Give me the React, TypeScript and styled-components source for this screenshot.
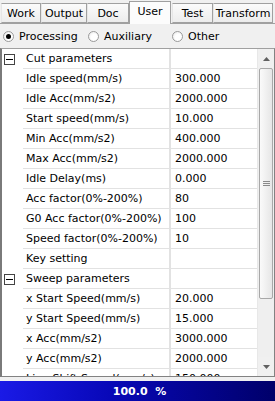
import React, { useState } from 'react'
import styled, { createGlobalStyle } from 'styled-components';

const GlobalStyle = createGlobalStyle`
    html, body {
        margin: 0;
        padding: 0;
        background: #f0f0f0;
    }
    * {
        box-sizing: border-box;
    }
`;

const font = `"DejaVu Sans", Tahoma, sans-serif`;

const Page = styled.div`
        width: 275px;
        height: 401px;
        display: flex;
        flex-direction: column;
        font-family: ${font};
        font-size: 11px;
        color: #000;
        background: #f0f0f0;
        overflow: hidden;
`;

const TabStrip = styled.div`
        height: 24px;
        display: flex;
        align-items: flex-end;
        padding-left: 1px;
        border-bottom: 1px solid #a0a0a0;
        flex-shrink: 0;
`;

const Tab = styled.div<{ $active?: boolean; $w: number }>`
        width: ${p => p.$w}px;
        height: ${p => (p.$active ? 23 : 20)}px;
        margin-bottom: ${p => (p.$active ? -1 : 0)}px;
        display: flex;
        align-items: center;
        justify-content: center;
        padding-bottom: ${p => (p.$active ? 3 : 0)}px;
        background: ${p => (p.$active ? '#fcfcfc' : 'linear-gradient(#fbfbfb, #ececec)')};
        border: 1px solid #a0a0a0;
        border-bottom: ${p => (p.$active ? 'none' : '1px solid #a0a0a0')};
        border-left-color: ${p => (p.$active ? '#a0a0a0' : '#e6e6e6')};
        margin-right: ${p => (p.$active ? 1 : 0)}px;
        white-space: nowrap;
`;

const RadioRow = styled.div`
        height: 24px;
        display: flex;
        align-items: center;
        padding-left: 3px;
        flex-shrink: 0;
`;

const RadioItem = styled.label<{ $w: number }>`
        width: ${p => p.$w}px;
        display: flex;
        align-items: center;
        gap: 5px;
`;

const RadioDot = styled.span<{ $on?: boolean }>`
        width: 11px;
        height: 11px;
        border-radius: 50%;
        border: 1px solid #9a9a9a;
        background: radial-gradient(circle at 60% 60%, #ffffff 40%, #e4e4e4);
        display: flex;
        align-items: center;
        justify-content: center;
        &::after {
            content: '';
            width: 5px;
            height: 5px;
            border-radius: 50%;
            background: ${p => (p.$on ? '#000' : 'transparent')};
        }
`;

const GridFrame = styled.div`
        height: 329px;
        display: flex;
        border: 1px solid #828282;
        border-left: 2px solid #7a7a7a;
        border-top: 1px solid #a0a0a0;
        background: #fff;
        flex-shrink: 0;
`;

const GridBody = styled.div`
        flex: 1;
        overflow: hidden;
`;

const Row = styled.div`
        height: 20px;
        display: grid;
        grid-template-columns: 21px 148px 1fr;
`;

const Margin = styled.div`
        display: flex;
        align-items: center;
        padding-left: 2px;
`;

const Cell = styled.div<{ $sep?: boolean }>`
        border-bottom: 1px solid #e2e2e2;
        border-right: ${p => (p.$sep ? '2px solid #e2e2e2' : 'none')};
        padding-left: ${p => (p.$sep ? 3 : 4)}px;
        display: flex;
        align-items: center;
        white-space: nowrap;
        overflow: hidden;
`;

const ExpandBox = styled.span`
        width: 11px;
        height: 11px;
        border: 1px solid #444;
        display: flex;
        align-items: center;
        justify-content: center;
        &::after {
            content: '';
            width: 7px;
            height: 1px;
            background: #000;
        }
`;

const ScrollBar = styled.div`
        width: 17px;
        display: flex;
        flex-direction: column;
        background: #efefef;
        border-left: 1px solid #e8e8e8;
`;

const ScrollButton = styled.div`
        height: 19px;
        display: flex;
        align-items: center;
        justify-content: center;
        background: #f0f0f0;
        flex-shrink: 0;
`;

const Thumb = styled.div`
        margin: 0 0 0 1px;
        height: 231px;
        width: 14px;
        flex-shrink: 0;
        border: 1px solid #a8a8a8;
        border-radius: 2px;
        background: linear-gradient(90deg, #fafafa, #e6e6e6);
        display: flex;
        align-items: center;
        justify-content: center;
`;

const Track = styled.div`
        flex: 1;
`;

const StatusBar = styled.div`
        margin-top: 4px;
        height: 20px;
        flex-shrink: 0;
        display: flex;
        align-items: center;
        justify-content: center;
        background: linear-gradient(90deg, #1a1ae6 0%, #0808b8 40%, #00006a 100%);
        color: #fff;
        font-weight: bold;
        font-size: 11px;
        white-space: pre;
        padding-left: 4px;
`;

interface Param {
    name: string,
    value?: string,
    group?: boolean,
}

const params: Param[] = [
    { name: 'Cut parameters', group: true },
    { name: 'Idle speed(mm/s)', value: '300.000' },
    { name: 'Idle Acc(mm/s2)', value: '2000.000' },
    { name: 'Start speed(mm/s)', value: '10.000' },
    { name: 'Min Acc(mm/s2)', value: '400.000' },
    { name: 'Max Acc(mm/s2)', value: '2000.000' },
    { name: 'Idle Delay(ms)', value: '0.000' },
    { name: 'Acc factor(0%-200%)', value: '80' },
    { name: 'G0 Acc factor(0%-200%)', value: '100' },
    { name: 'Speed factor(0%-200%)', value: '10' },
    { name: 'Key setting', value: '' },
    { name: 'Sweep parameters', group: true },
    { name: 'x Start Speed(mm/s)', value: '20.000' },
    { name: 'y Start Speed(mm/s)', value: '15.000' },
    { name: 'x Acc(mm/s2)', value: '3000.000' },
    { name: 'y Acc(mm/s2)', value: '2000.000' },
    { name: 'Line Shift Speed(mm/s)', value: '150.000' },
];

const tabs = [
    { label: 'Work', w: 40 },
    { label: 'Output', w: 46 },
    { label: 'Doc', w: 42 },
    { label: 'User', w: 42 },
    { label: 'Test', w: 41 },
    { label: 'Transform', w: 60 },
];

function App() {
    const [mode, setMode] = useState('Processing');

    return (
        <Page>
            <GlobalStyle />
            <TabStrip>
                {tabs.map(t => (
                    <Tab key={t.label} $w={t.w} $active={t.label === 'User'}>{t.label}</Tab>
                ))}
            </TabStrip>
            <RadioRow>
                {[['Processing', 85], ['Auxiliary', 84], ['Other', 80]].map(([label, w]) => (
                    <RadioItem key={label} $w={w as number} onClick={() => setMode(label as string)}>
                        <RadioDot $on={mode === label} />
                        {label}
                    </RadioItem>
                ))}
            </RadioRow>
            <GridFrame>
                <GridBody>
                    {params.map(p => (
                        <Row key={p.name}>
                            <Margin>{p.group && <ExpandBox />}</Margin>
                            <Cell $sep>{p.name}</Cell>
                            <Cell>{p.value}</Cell>
                        </Row>
                    ))}
                </GridBody>
                <ScrollBar>
                    <ScrollButton>
                        <svg width="7" height="4" viewBox="0 0 7 4"><path d="M0 4 L3.5 0 L7 4 Z" fill="#606060" /></svg>
                    </ScrollButton>
                    <Thumb>
                        <svg width="7" height="7" viewBox="0 0 7 7">
                            <path d="M0 1.5 H7 M0 3.5 H7 M0 5.5 H7" stroke="#8a8a8a" strokeWidth="1" />
                        </svg>
                    </Thumb>
                    <Track />
                    <ScrollButton>
                        <svg width="7" height="4" viewBox="0 0 7 4"><path d="M0 0 L3.5 4 L7 0 Z" fill="#606060" /></svg>
                    </ScrollButton>
                </ScrollBar>
            </GridFrame>
            <StatusBar>{'100.0  %'}</StatusBar>
        </Page>
    )
}

export default App;
